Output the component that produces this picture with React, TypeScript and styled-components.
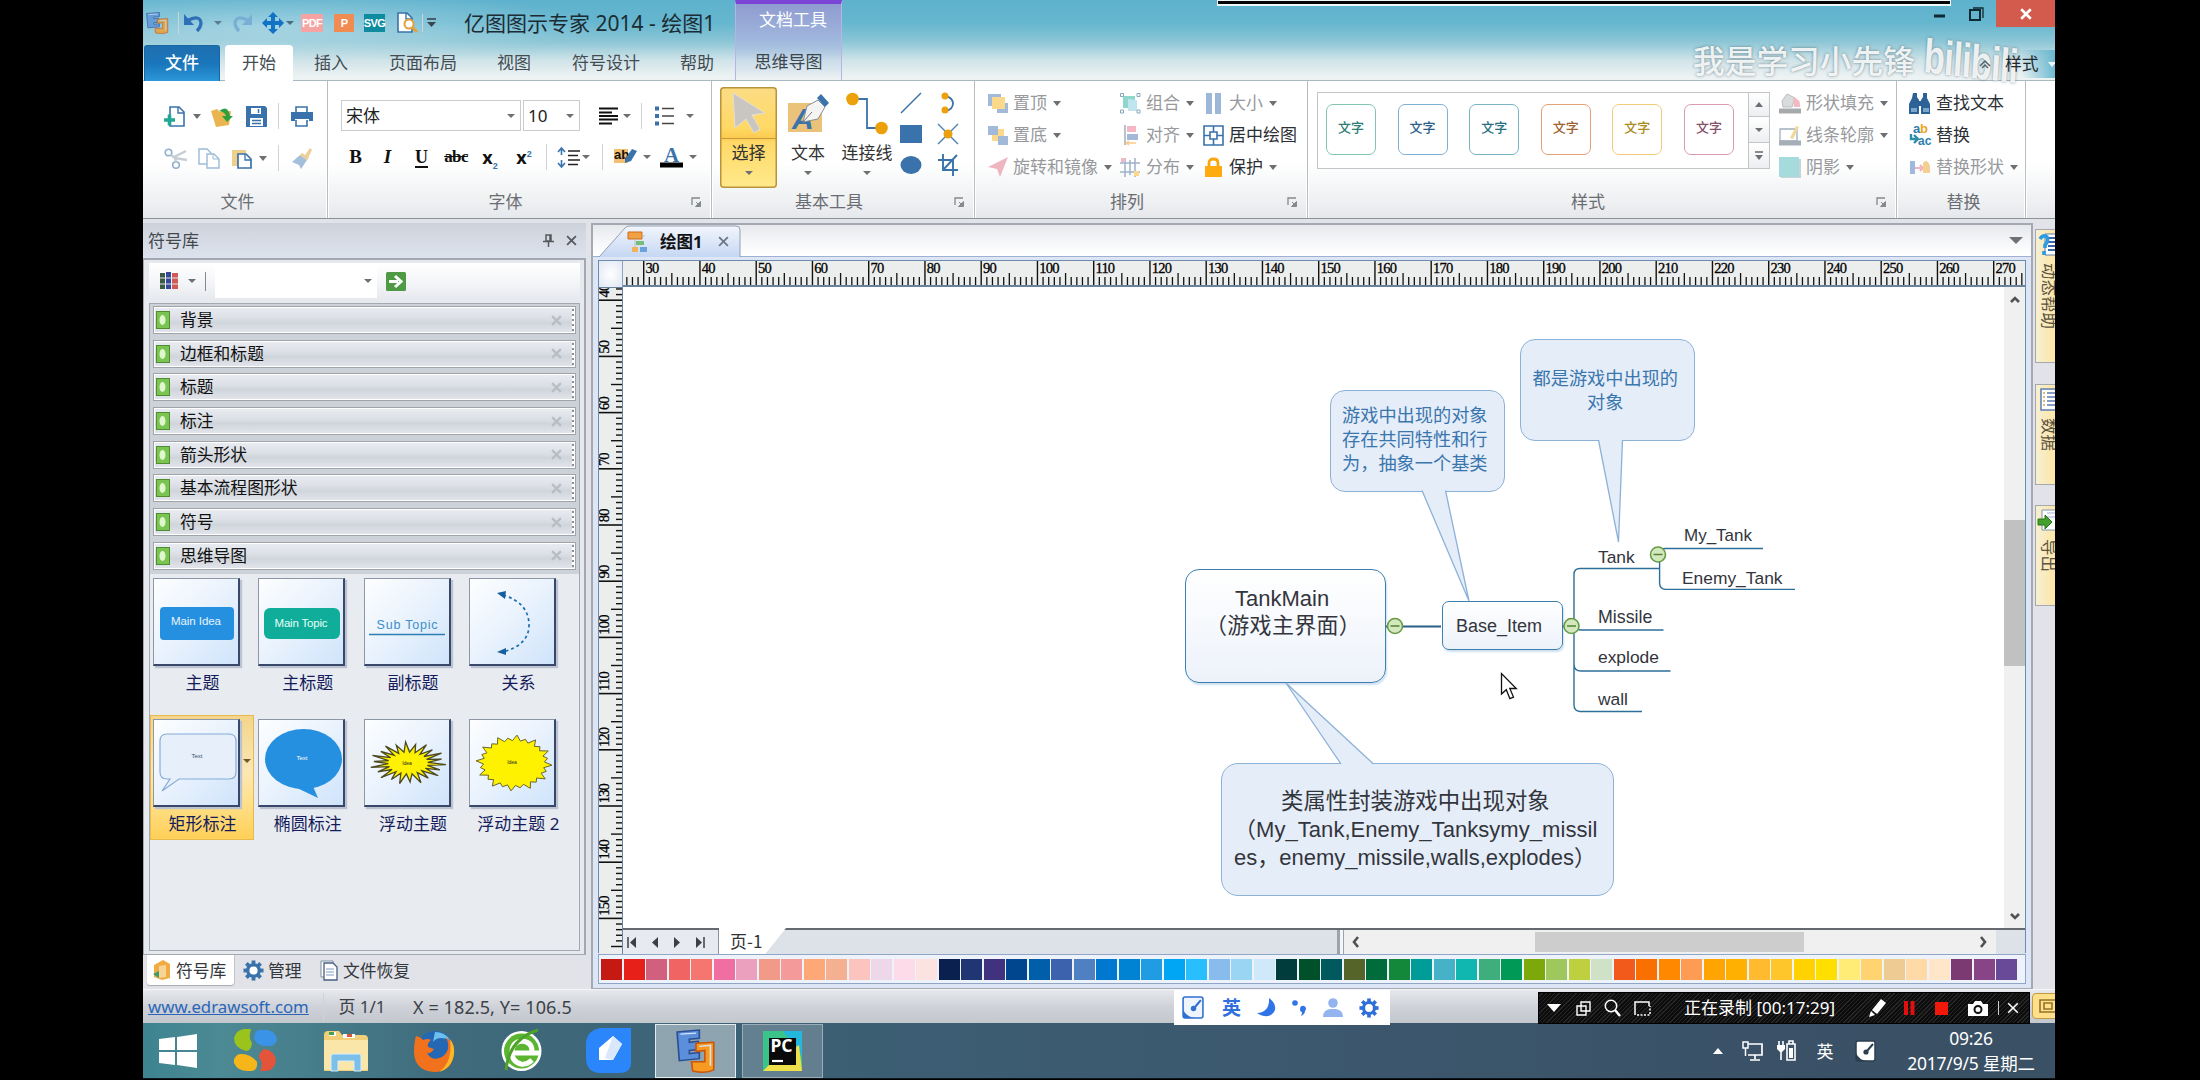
import React from "react";
import styled, { createGlobalStyle, css } from "styled-components";

const UI = '"Noto Sans","Noto Sans CJK SC",sans-serif';
const ARIAL = '"Liberation Sans","Noto Sans CJK SC",sans-serif';

const Global = createGlobalStyle`
  *{box-sizing:border-box}
  body{margin:0;background:#000;font-family:${UI};font-size:17px;overflow:hidden}
  svg{display:block;overflow:visible;flex:none}
`;

const Screen = styled.div`
  width:2200px;height:1080px;background:#000;padding-left:143px;
`;
const Desktop = styled.div`
  width:1912px;height:1079px;display:flex;flex-direction:column;overflow:hidden;
`;

/* ---------- shared bits ---------- */
const Row = styled.div<{ $h?: number; $top?: number }>`
  display:flex;align-items:center;flex:none;
  height:${(p) => (p.$h ? p.$h + "px" : "auto")};margin-top:${(p) => p.$top || 0}px;
`;
const Cell = styled.span<{ $w: number; $ml?: number }>`
  flex:none;display:flex;align-items:center;justify-content:center;
  width:${(p) => p.$w}px;margin-left:${(p) => p.$ml || 0}px;white-space:nowrap;
`;
const Caret = styled.i<{ $ml?: number; $c?: string; $s?: number }>`
  flex:none;width:0;height:0;margin-left:${(p) => p.$ml || 0}px;
  border:${(p) => p.$s || 4.5}px solid transparent;border-bottom:0;
  border-top:${(p) => (p.$s || 4.5) + 0.5}px solid ${(p) => p.$c || "#6d7073"};
`;
const Bar = styled.i<{ $ml?: number; $h?: number }>`
  flex:none;width:1px;height:${(p) => p.$h || 26}px;background:#cfd2d6;margin-left:${(p) => p.$ml || 0}px;
`;
const Glyph = ({ w, h, children }: { w: number; h: number; children: React.ReactNode }) => (
  <svg width={w} height={h} viewBox={`0 0 ${w} ${h}`} fill="none">{children}</svg>
);

/* ---------- header ---------- */
const Header = styled.header`
  height:81px;flex:none;display:flex;position:relative;border-bottom:1px solid #a9b9c0;
  background:linear-gradient(#5fb2cd 0,#65b6cf 28%,#8cc6d6 52%,#cfe3e8 75%,#edf2f3 96%);
`;
const HeaderMain = styled.div`
  width:592px;flex:none;display:flex;flex-direction:column;
  background:radial-gradient(ellipse 330px 34px at 130px 26px,rgba(255,255,255,.38),transparent);
`;
const WindowTitle = styled.h1`
  margin:0 0 0 28px;font-size:21px;font-weight:400;color:#1c2b33;white-space:nowrap;line-height:30px;
`;
const Badge = styled.span<{ $bg: string }>`
  width:100%;height:18px;background:${(p) => p.$bg};color:#fff;display:flex;align-items:center;justify-content:center;
  font:700 11px/18px "Liberation Sans",sans-serif;letter-spacing:-.6px;
`;
const TabText = styled.span<{ $ml: number; $w: number }>`
  flex:none;margin-left:${(p) => p.$ml}px;width:${(p) => p.$w}px;text-align:center;white-space:nowrap;
  color:#434c52;font-size:17px;line-height:36px;height:36px;
`;
const FileTab = styled(TabText)`
  color:#fff;border-radius:3px 3px 0 0;border:1px solid #1767a3;border-bottom:0;
  background:linear-gradient(#1f6fb0,#1a76bb 50%,#2b97d8);line-height:34px;font-weight:500;
`;
const ActiveTab = styled(TabText)`
  background:#fff;border-radius:4px 4px 0 0;height:37px;
`;
const ToolTab = styled.div`
  width:107px;flex:none;border-top:4px solid #7a45d6;
  background:linear-gradient(#8f9bd0,#9fb5dc 45%,rgba(200,215,235,.5) 75%,rgba(235,240,244,0));
  border-left:1px solid #b9b2e4;border-right:1px solid #b9b2e4;
  display:flex;flex-direction:column;align-items:center;
  span{line-height:24px;white-space:nowrap}
  span:first-child{color:#fff;margin:4px 0 18px 9px}
  span:last-child{color:#3c464d}
`;
const HeaderRight = styled.div`
  flex:1;display:flex;justify-content:flex-end;align-items:flex-start;
`;
const RecordFrame = styled.i`
  position:absolute;left:1074px;top:0;width:734px;height:6px;background:#050505;border:1px solid #eef7fa;border-bottom-width:2px;
`;
const CloseBox = styled.span`
  width:59px;height:27px;background:#d25b4e;display:flex;align-items:center;justify-content:center;margin-left:12px;
`;
const Watermark = styled.div`
  position:absolute;left:1550px;top:36px;height:46px;display:flex;align-items:center;color:rgba(255,255,255,.88);
  text-shadow:0 0 3px rgba(60,90,100,.7);font-size:31.7px;font-weight:500;white-space:nowrap;
  b{font:700 48px/40px "Liberation Sans",sans-serif;letter-spacing:-1px;transform:scaleX(.72) rotate(5deg);transform-origin:0 50%;margin:-6px 0 0 9px}
`;
const StyleMenu = styled.div`
  position:absolute;right:0;top:50px;height:28px;width:76px;display:flex;align-items:center;color:#1e2a30;
  background:linear-gradient(90deg,transparent 55%,rgba(98,180,206,.9));
  span{flex:none;margin-left:14px;line-height:28px;white-space:nowrap;font-size:16.800px}
`;

/* ---------- ribbon ---------- */
const Ribbon = styled.div`
  height:138px;flex:none;display:flex;border-bottom:1px solid #8d9298;
  background:linear-gradient(#fff 0,#fff 60%,#eef0f2 88%,#e6e8ec);
`;
const Group = styled.section<{ $w: number }>`
  width:${(p) => p.$w}px;flex:none;display:flex;flex-direction:column;
  border-right:1px solid #b9bcc1;box-shadow:inset -1px 0 #fff,1px 0 #fff;
`;
const GroupBody = styled.div<{ $pl?: number }>`
  height:105px;display:flex;align-items:flex-start;padding-left:${(p) => p.$pl || 0}px;
`;
const Stack = styled.div<{ $top: number; $ml?: number; $w?: number }>`
  flex:none;display:flex;flex-direction:column;padding-top:${(p) => p.$top}px;margin-left:${(p) => p.$ml || 0}px;
  width:${(p) => (p.$w ? p.$w + "px" : "auto")};
`;
const GroupLabel = styled.div<{ $plain?: boolean }>`
  height:32px;display:flex;align-items:center;color:#6a6d72;
  span{flex:1;text-align:center;line-height:32px;padding-left:${(p) => (p.$plain ? 5 : 2)}px}
  svg{margin-right:10px;margin-left:10px}
`;
const Combo = styled.div<{ $w: number; $ml: number }>`
  flex:none;width:${(p) => p.$w}px;height:31px;margin-left:${(p) => p.$ml}px;border:1.5px solid #c9cbce;background:#fff;
  display:flex;align-items:center;justify-content:space-between;padding:0 5px 0 4px;color:#222;font-size:17px;
  span{line-height:28px}
`;
const Letter = styled.span<{ $i?: boolean; $u?: boolean; $s?: boolean; $sz?: number; $sans?: boolean }>`
  font:700 ${(p) => p.$sz || 19}px/26px ${(p) => (p.$sans ? '"Noto Sans",sans-serif' : '"Liberation Serif",serif')};color:#111;
  ${(p) => p.$i && css`font-style:italic;`}
  ${(p) => p.$u && css`text-decoration:underline 2px;text-underline-offset:3px;`}
  ${(p) => p.$s && css`text-decoration:line-through;letter-spacing:-.6px;`}
  sub,sup{font:700 9px/0 "Liberation Sans",sans-serif;color:#3a73ab}
`;
const BigButton = styled.div<{ $w: number; $ml?: number; $on?: boolean }>`
  flex:none;width:${(p) => p.$w}px;height:101px;margin:6px 0 0 ${(p) => p.$ml || 0}px;
  display:flex;flex-direction:column;align-items:center;color:#333;
  ${(p) => p.$on && css`
    border-radius:4px;background:linear-gradient(#fbdc85,#ffd965 40%,#fccb50 50%,#ffd968 55%,#ffe98c);box-shadow:inset 0 0 0 1.5px #b8933a;
  `}
`;
const BigIcon = styled.span<{ $on?: boolean }>`
  height:52px;width:100%;display:flex;align-items:center;justify-content:center;
  ${(p) => p.$on && css`border-bottom:1px solid #c39a3e;`}
`;
const BigText = styled.span`height:28px;line-height:28px;white-space:nowrap;margin-bottom:4px;`;
const ShapeGrid = styled.div`
  display:grid;grid-template-columns:37px 22px;grid-auto-rows:31px;margin:6px 0 0 5px;align-items:center;
`;
const ToolItem = styled.div<{ $off?: boolean }>`
  height:32px;display:flex;align-items:center;gap:5px;color:${(p) => (p.$off ? "#97999c" : "#2c2f33")};white-space:nowrap;
  span{line-height:32px}
`;
const Tool = ({ icon, text, caret, off }: { icon: React.ReactNode; text: string; caret?: boolean; off?: boolean }) => (
  <ToolItem $off={off}>{icon}<span>{text}</span>{caret && <Caret $ml={1} />}</ToolItem>
);
const Gallery = styled.div`
  width:453px;height:77px;margin:11px 0 0 9px;border:1.5px solid #c3c5c8;background:#fff;display:flex;flex:none;
`;
const GalleryCards = styled.div`flex:1;display:flex;gap:21.6px;padding:11px 0 0 8px;`;
const StyleCard = styled.div<{ $line: string; $ink: string }>`
  width:50px;height:51px;border:1.5px solid ${(p) => p.$line};border-radius:7px;flex:none;
  font-size:13px;line-height:44px;text-align:center;color:${(p) => p.$ink};font-weight:500;
`;
const GalleryScroll = styled.div`
  width:21px;border-left:1px solid #c3c5c8;display:grid;grid-template-rows:24px 26px 1fr;
  div{border-bottom:1px solid #c3c5c8;background:linear-gradient(#fff,#eceef1);display:flex;align-items:center;justify-content:center}
  div:last-child{border-bottom:0}
`;

/* ---------- library panel ---------- */
const Work = styled.div`height:770px;flex:none;display:flex;background:#e1e3e8;overflow:hidden;`;
const Library = styled.aside`width:443px;flex:none;display:flex;flex-direction:column;padding-top:4px;`;
const LibraryHead = styled.div`
  height:35px;display:flex;align-items:center;background:linear-gradient(#cdd2da,#dde3ee);color:#43484e;padding-left:5px;padding-right:9px;
  span{flex:1;line-height:30px}
  svg{margin-left:12px}
`;
const LibraryFrame = styled.div`
  height:697px;border:solid #a4a9b1;border-width:2px 2px 1.5px 1px;padding:3px 4px 3px 5px;background:#e6e9ee;display:flex;flex-direction:column;
`;
const LibraryTools = styled.div`
  height:36px;flex:none;display:flex;align-items:center;background:linear-gradient(#fff,#f3f4f7 60%,#e6e9ee);margin-bottom:4px;
`;
const SearchCombo = styled.div`
  width:162px;height:34px;margin-left:9px;background:#fff;display:flex;align-items:center;justify-content:flex-end;padding-right:5px;
`;
const Shelf = styled.div`flex:1;border:1px solid #a4a9b1;background:#e8ebf0;`;
const Sections = styled.div`
  background:#cdd1d8;padding:2px 3px 4px;display:flex;flex-direction:column;gap:5.7px;
`;
const Section = styled.div`
  height:28px;border:1.5px solid #9fa4ab;box-shadow:inset 0 0 0 1px #fff;display:flex;align-items:center;padding:0 1px 0 2px;color:#111;
  background:linear-gradient(#e9ecf1,#dde1e7 40%,#d0d5dc 60%,#e3e6eb);
  span{flex:1;margin-left:10px;line-height:26px;font-size:16.8px}
`;
const Grip = styled.i`width:2px;height:22px;margin-left:10px;background:repeating-linear-gradient(#8b9097 0 2px,#fff 2px 5px);`;
const Thumbs = styled.div`display:grid;grid-template-columns:repeat(4,105.3px);row-gap:17px;`;
const ThumbCell = styled.figure<{ $on?: boolean }>`
  margin:0;height:124.5px;width:104px;padding:4px 0 0 3px;position:relative;
  ${(p) => p.$on && css`background:linear-gradient(#f3d58a,#fbe7b4 45%,#ffe08a 70%,#ffcf55);box-shadow:inset 0 0 0 1px #e8b94c;`}
  figcaption{color:#141c5c;text-align:center;line-height:24px;margin:5px 0 0 0;white-space:nowrap;width:99px}
`;
const Thumb = styled.div`
  width:87px;height:88px;border:1px solid #8d97a8;border-right:2px solid #39476b;border-bottom:2px solid #39476b;
  background:linear-gradient(135deg,#fdfeff,#e9f2fd 50%,#cfe4fb);box-shadow:2px 2px 1px #bcc3d0;
`;
const ThumbArrow = styled.i`position:absolute;right:3px;top:44px;border:4px solid transparent;border-top:4px solid #6b5a2c;border-bottom:0;`;
const LibraryTabs = styled.div`flex:1;display:flex;align-items:flex-start;padding-left:4px;color:#33383d;`;
const LibraryTab = styled.div<{ $on?: boolean; $w: number; $gap?: number }>`
  width:${(p) => p.$w}px;height:30px;display:flex;align-items:center;gap:${(p) => p.$gap || 5}px;padding-left:6px;white-space:nowrap;
  font-size:16.8px;
  ${(p) => p.$on && css`background:#fff;border-radius:0 0 3px 3px;box-shadow:0 1px 1px #a5a9af,1px 0 #c5c8cd;`}
`;

/* ---------- document ---------- */
const Doc = styled.main`
  width:1442px;margin:4px 0 0 5px;flex:none;border:2px solid #a4a9b1;border-bottom:1px solid #a4a9b1;background:#dce6f7;
  display:flex;flex-direction:column;
`;
const TabStrip = styled.div`
  height:32px;flex:none;background:linear-gradient(#e6e8ec,#f7f8fa 60%,#fff);border-bottom:1px solid #9fb0d0;
  display:flex;justify-content:space-between;align-items:center;padding:0 8px 0 6px;
`;
const DocTab = styled.div`
  width:141px;height:31px;margin-top:2px;display:flex;align-items:center;padding-left:28px;position:relative;
  b{font-weight:700;color:#111;font-size:16.5px;margin-left:12px;flex:1;line-height:28px;position:relative}
  svg{position:relative;margin-right:0}
  svg:last-child{margin-right:11px}
`;
const TabShape = styled.svg`&&{position:absolute;left:0;top:0;margin:0}`;
const Sheet = styled.div`
  margin:3px 5px 0 5px;width:1428px;height:693px;flex:none;border:1px solid #6f8bab;display:grid;
  grid-template-columns:24px 1fr;grid-template-rows:26px 1fr;
`;
const Corner = styled.div`background:radial-gradient(#fff,#dfe6f4);border-right:1px solid #8da4c4;`;
const RulerH = styled.div`background:#eceeee;border-bottom:2px solid #6a839c;overflow:hidden;`;
const RulerV = styled.div`background:#eceeee;border-right:1px solid #6a839c;border-top:1px solid #6a839c;overflow:hidden;`;
const View = styled.div`display:grid;grid-template-columns:1fr 21px;grid-template-rows:641px 1fr;`;
const Canvas = styled.div`background:#fff;position:relative;overflow:hidden;`;
const ScrollV = styled.div`
  background:#f0f0f0;display:flex;flex-direction:column;align-items:center;padding:7px 0 6px;
  i{width:21px;height:146px;background:#c1c1c1}
`;
const PageBar = styled.div`
  grid-column:1 / 3;display:flex;align-items:stretch;border-top:2px solid #666a6e;background:#dde1e8;
`;
const PageNav = styled.div`
  width:96px;display:flex;align-items:center;justify-content:space-between;padding:0 13px 0 4px;background:#e7eaf0;border-right:1px solid #8d9298;
`;
const PageTab = styled.div`
  width:67px;margin-top:-2px;background:#fff;clip-path:polygon(0 0,100% 0,69% 100%,0 100%);
  font:17px/26px "Noto Sans CJK SC",sans-serif;color:#333;padding-left:11px;
`;
const Splitter = styled.i`width:7px;margin-left:551px;background:#f4f6f9;border:solid #9da3ac;border-width:0 1px 0 3px;`;
const ScrollH = styled.div`
  width:652px;background:#f0f0f0;display:flex;align-items:center;padding:0 7px 0 6px;
  i{width:270px;height:20px;background:#cdcdcd;margin:0 173px 0 173px}
`;
const Palette = styled.div`
  margin:1px 5px 0 5px;height:30px;width:1428px;border:1px solid #8fa6c6;display:flex;gap:1.5px;padding:4px 0 0 2px;background:#eef3fb;
`;
const Swatch = styled.i<{ $c: string }>`width:21px;height:21px;flex:none;background:${(p) => p.$c};`;

const NodeBox = styled.div<{ $x: number; $y: number; $w: number; $h: number; $r: number; $kind?: "note" }>`
  position:absolute;left:${(p) => p.$x - 623}px;top:${(p) => p.$y - 287}px;width:${(p) => p.$w}px;height:${(p) => p.$h}px;
  border-radius:${(p) => p.$r}px;border:1.5px solid ${(p) => (p.$kind ? "#8db2d8" : "#3d7fae")};
  background:${(p) => (p.$kind ? "#e5edf8" : "linear-gradient(#fff,#edf2fa)")};
  ${(p) => !p.$kind && css`box-shadow:1px 2px 2px #cfe0f0;`}
`;
const Label = styled.div<{ $x: number; $y: number; $s?: number; $c?: string; $ls?: number }>`
  position:absolute;left:${(p) => p.$x - 623}px;top:${(p) => p.$y - 287 - 15}px;line-height:30px;white-space:nowrap;
  font-family:${ARIAL};font-size:${(p) => p.$s || 17.4}px;color:${(p) => p.$c || "#33353c"};letter-spacing:${(p) => p.$ls || 0}px;
`;
const Lines = styled.svg`&&{position:absolute;left:0;top:0}`;

/* ---------- right rail ---------- */
const Rail = styled.div`flex:1;padding:10px 0 0 2px;display:flex;flex-direction:column;`;
const RailTab = styled.div<{ $h: number; $mb: number }>`
  height:${(p) => p.$h}px;margin-bottom:${(p) => p.$mb}px;width:34px;border:1.5px solid #a4a9b1;
  background:linear-gradient(90deg,#f6efd2,#ffe399 80%);padding:3px 0 0 3px;
  span{display:block;writing-mode:vertical-rl;text-orientation:sideways;color:#5a5240;line-height:20px;margin-top:8px;font-size:16.5px}
`;

/* ---------- status + taskbar ---------- */
const Status = styled.footer`
  height:34px;flex:none;display:flex;align-items:center;border-top:1px solid #f4f5f7;
  background:linear-gradient(#e6e8ed,#cfd2d8 50%,#c3c7ce);color:#3c4147;position:relative;
  span{white-space:nowrap;line-height:30px}
`;
const Link = styled.a`color:#2a66b8;text-decoration:underline;margin-left:5px;width:163px;font-size:16.8px;`;
const Coords = styled.span`font-size:18px;margin-left:26px;width:160px;letter-spacing:.1px;`;
const Ime = styled.div`
  position:absolute;left:1031px;top:0;width:216px;height:35px;background:#fff;display:flex;align-items:center;z-index:1;
  b{color:#2f6fe0;font-weight:700;font-size:19px;line-height:34px}
`;
const Recorder = styled.div`
  position:absolute;left:1395px;top:2px;width:492px;height:32px;color:#fff;display:flex;align-items:center;
  background:repeating-linear-gradient(135deg,#0d0d0d 0 2px,#262626 2px 3px);border:1px solid #000;
`;
const YellowTool = styled.div`
  position:absolute;left:1889px;top:3px;width:30px;height:26px;border-radius:4px;border:1.5px solid #c39a3e;background:#ffe08a;
  display:flex;align-items:center;padding-left:6px;
`;
const Taskbar = styled.div`
  height:56px;flex:none;display:flex;align-items:center;color:#fff;border-bottom:1px solid #10151a;
  background:linear-gradient(90deg,#3d8490 0,#4c8a94 4%,#3f6b7c 16%,#3c5f74 35%,#3c586e 60%,#3a5167 85%,#3a5064);
`;
const TaskButton = styled.div<{ $on?: boolean; $ml: number }>`
  width:81px;height:54px;margin-left:${(p) => p.$ml}px;display:flex;align-items:center;justify-content:center;
  background:${(p) => (p.$on ? "rgba(255,255,255,.42)" : "rgba(255,255,255,.2)")};border:1.5px solid ${(p) => (p.$on ? "#e4ebef" : "rgba(255,255,255,.35)")};
`;
const Clock = styled.div`
  width:134px;margin-left:28px;text-align:center;font-size:17.500px;line-height:25px;white-space:nowrap;letter-spacing:-.2px;
`;

/* ---------- data ---------- */
const sections = ["背景", "边框和标题", "标题", "标注", "箭头形状", "基本流程图形状", "符号", "思维导图"];
const cards: [string, string][] = [
  ["#82c4b4", "#2e7d76"], ["#7fb0d4", "#2c5f8c"], ["#78b4c6", "#28707f"],
  ["#e4a077", "#a0612f"], ["#f0cc78", "#a98b1e"], ["#d99bb0", "#84506a"],
];
const swatches = (
  "c41a12 e8201a d1607f f16464 f4766e f06fa0 eba0bd f19a88 f59a9a ffa877 f4b090 fbc4be ecd8e8 fddbe9 fde2e2 " +
  "0a2150 203672 413280 00468e 005fa8 3c62ae 4e80c2 0078d0 0083d2 209de2 00a6f4 29bfff 87bcec 9ad5f4 cfe9fa " +
  "003c3c 00502a 00595c 55652a 006c3c 14883a 009c98 46b2c8 10b6b0 3eae7c 009a56 7ca80a 9ec85e bed040 cfe2c8 " +
  "f25a1c fa7000 ff8800 ff9c54 ffa400 ffb000 ffba30 ffc62c ffd200 ffdf00 ffec76 ffd470 edcb92 ffdaa6 ffe6c8 " +
  "7c3a72 874486 694a98"
).split(" ");

/* ---------- icons ---------- */
const B = "#3a73ab";
const EdrawMark = ({ w, h, dim }: { w: number; h: number; dim?: boolean }) => (
  <svg width={w} height={h} viewBox="3 1 36 43" preserveAspectRatio="none" opacity={dim ? 0.75 : 1}>
    <path d="M4 4l20-2v8l-9 1v3l8-1v8l-8 1v3l9-1v6L6 32z" fill="#5b8fdc" stroke="#2b4f94" strokeWidth="1.500" />
    <path d="M21 15l16-1v27q-7 4-19 1l-1-9h12V22l-8 1z" fill="#f79a22" stroke="#c9560c" strokeWidth="1.500" />
    <path d="M7 6l14-1M24 18l10-1v20" stroke="#d6e4f8" strokeWidth="1.400" fill="none" />
  </svg>
);
const Undo = ({ c, flip }: { c: string; flip?: boolean }) => (
  <svg width="20" height="19" viewBox="0 0 20 19">
    <g transform={flip ? "translate(20 0) scale(-1 1)" : undefined}>
      <path d="M3 8q13-7 14 2 0 4-4 8" fill="none" stroke={c} strokeWidth="3.200" />
      <path d="M0 1v11h10z" fill={c} />
    </g>
  </svg>
);
const Page = ({ c = B, o = 1 }: { c?: string; o?: number }) => (
  <g opacity={o}><path d="M6 1h9l5 5v14H6z" fill="#fff" stroke={c} strokeWidth="1.6" /><path d="M14 1v6h6" stroke={c} strokeWidth="1.4" fill="none" /></g>
);
const Launcher = () => (
  <Glyph w={10} h={10}><path d="M1 8V1h8" stroke="#85888c" strokeWidth="1.3" /><path d="M5 5l3 3M9.500 4.500v5h-5z" stroke="#85888c" fill="#85888c" /></Glyph>
);
const Cross = ({ s = 10, c = "#5d6268", w = 2 }: { s?: number; c?: string; w?: number }) => (
  <svg width={s} height={s} viewBox="0 0 10 10"><path d="M1 1l8 8M9 1L1 9" stroke={c} strokeWidth={w} /></svg>
);
const Gear = ({ s, c }: { s: number; c: string }) => (
  <svg width={s} height={s} viewBox="-11 -11 22 22">
    {[0, 45, 90, 135].map((a) => <path key={a} d="M0-10.500V10.500" stroke={c} strokeWidth="4" transform={`rotate(${a})`} />)}
    <circle r="6" fill="#fff" stroke={c} strokeWidth="3.4" />
  </svg>
);
const PenSquare = ({ c, bg, s = 21 }: { c: string; bg: string; s?: number }) => (
  <svg width={s} height={s + 1} viewBox="0 0 21 22">
    <rect x="1" y="1" width="19" height="20" rx="2" fill={bg} stroke={c} strokeWidth="1.5" />
    <path d="M1 13q3 7 11 8H3q-2 0-2-2z" fill={c} /><path d="M18 4l-6 7" stroke={c} strokeWidth="2" /><circle cx="11" cy="12" r="2.600" fill={c} />
  </svg>
);

const burst = (cx: number, cy: number, rx: number, ry: number, k: number, n: number) =>
  Array.from({ length: n * 2 }, (_, i) => {
    const a = (Math.PI * i) / n + 0.08;
    const f = i % 2 ? k : i % 4 ? 0.9 : 1;
    return `${(cx + rx * f * Math.cos(a)).toFixed(1)},${(cy + ry * f * Math.sin(a)).toFixed(1)}`;
  }).join(" ");

const T = (p: { x: number; y: number; s: number; c: string; children: string; w?: number }) => (
  <text x={p.x} y={p.y} fontSize={p.s} fill={p.c} textAnchor="middle" fontFamily="Liberation Sans" textLength={p.w}>{p.children}</text>
);
const thumbs: { name: string; on?: boolean; art: React.ReactNode }[] = [
  { name: "主题", art: <><rect x="6" y="28" width="74" height="33" rx="4" fill="#2690e0" /><T x={42} y={45.500} s={11.500} c="#e8f4ff" w={50}>Main Idea</T></> },
  { name: "主标题", art: <><rect x="5" y="29" width="76" height="31" rx="6" fill="#10ae9a" /><T x={42} y={47.500} s={11.500} c="#e4fff8" w={53}>Main Topic</T></> },
  { name: "副标题", art: <><T x={42} y={50} s={12.500} c="#3a8fc8" w={61}>Sub Topic</T><path d="M4 55.500h76" stroke="#2f7fb4" strokeWidth="1.600" /></> },
  { name: "关系", art: <><path d="M33 16q26 8 26 30 0 20-26 27" fill="none" stroke="#1d6cab" strokeWidth="1.700" strokeDasharray="3 3" /><path d="M27 14l9-2-1 8zM27 73l9-4v7z" fill="#155fa0" /></> },
  { name: "矩形标注", on: true, art: <><path d="M13 14h62q7 0 7 7v31q0 7-7 7H25L8 71l8-12h-3q-7 0-7-7V21q0-7 7-7z" fill="#e6effa" stroke="#86acd8" strokeWidth="1.200" /><T x={43} y={38} s={6} c="#35506e">Text</T></> },
  { name: "椭圆标注", art: <><ellipse cx="44.500" cy="39" rx="38.500" ry="30" fill="#2690e0" /><path d="M36 67l23 11-6-14z" fill="#2690e0" /><T x={43} y={40} s={6} c="#fff">Text</T></> },
  { name: "浮动主题", art: <><polygon points={burst(43, 43, 38, 21, 0.52, 22)} fill="#fff200" stroke="#4d4a22" strokeWidth="1.300" /><T x={42} y={45} s={5} c="#222">Idea</T></> },
  { name: "浮动主题 2", art: <><polygon points={burst(44, 43, 38, 28, 0.8, 24)} fill="#fff200" stroke="#6a6628" strokeWidth="1" /><T x={42} y={44} s={5} c="#222">Idea</T></> },
];

/* ---------- rulers: one minor tick is 5.625px ---------- */
const HorizontalRuler = () => {
  const ticks = [];
  for (let i = -3; i <= 245; i++) {
    const x = 20.7 + i * 5.625;
    const m = ((i % 10) + 10) % 10;
    ticks.push(<path key={i} d={`M${x} 24V${m === 0 ? 0 : m === 5 ? 12 : 16}`} stroke="#111" strokeWidth={m === 0 ? 1.4 : 1.3} />);
  }
  return (
    <svg width="1402" height="25">
      {ticks}
      {Array.from({ length: 25 }, (_, i) => (
        <text key={i} x={22.500 + i * 56.25} y="12" fontFamily="Liberation Serif" fontSize="14.500" letterSpacing="-.8" fill="#000" stroke="#000" strokeWidth=".3">{30 + i * 10}</text>
      ))}
    </svg>
  );
};
const VerticalRuler = () => {
  const ticks = [];
  for (let i = -2; i <= 115; i++) {
    const y = 12.2 + i * 5.62;
    const m = ((i % 10) + 10) % 10;
    ticks.push(<path key={i} d={`M24 ${y}H${m === 0 ? 0 : m === 5 ? 12 : 17}`} stroke="#111" strokeWidth={m === 0 ? 1.6 : 1.4} />);
  }
  return (
    <svg width="24" height="666">
      {ticks}
      {Array.from({ length: 12 }, (_, i) => (
        <text key={i} transform={`translate(10 ${9.5 + i * 56.2}) rotate(-90)`} fontFamily="Liberation Serif" fontSize="14.500" letterSpacing="-.8" fill="#000" stroke="#000" strokeWidth=".3">{40 + i * 10}</text>
      ))}
    </svg>
  );
};

const Fold = ({ x, y }: { x: number; y: number }) => (
  <g><circle cx={x} cy={y} r="7.500" fill="#d3e8bd" stroke="#679b45" strokeWidth="1.600" /><path d={`M${x - 4.5} ${y}h9`} stroke="#55803a" strokeWidth="1.500" /></g>
);

const MindMap = () => (
  <Canvas>
    <NodeBox $x={1185} $y={569} $w={201} $h={114} $r={14} />
    <NodeBox $x={1441.500} $y={601} $w={121} $h={49} $r={7} />
    <NodeBox $x={1330} $y={389.500} $w={175} $h={102} $r={15} $kind="note" />
    <NodeBox $x={1519.500} $y={338.500} $w={175} $h={102.500} $r={15} $kind="note" />
    <NodeBox $x={1221} $y={763} $w={392.500} $h={133} $r={17} $kind="note" />
    <Lines width="1380" height="641" viewBox="623 287 1380 641">
      <g fill="#e5edf8" stroke="#8db2d8" strokeWidth="1.300">
        <path d="M1422 490.500L1469 601 1445.500 490.500" /><path d="M1598.500 440L1618.500 542 1622.500 440" /><path d="M1341 764L1286 683 1373.500 764" />
      </g>
      <g fill="none" stroke="#2d6f9b" strokeWidth="1.400">
        <path d="M1386 626.500H1441" stroke="#2b5f85" strokeWidth="2" />
        <path d="M1562 626.500h12M1659.600 568.500H1580q-6 0-6 6V705q0 6 6 6.500H1642M1574 622q0 8 7 8H1663.500M1574 664q0 7 7 7H1670.500" />
        <path d="M1659.600 560v23q0 6 6 6.400H1795M1659 556q0-7.500 6-7.500H1763" />
      </g>
      <Fold x={1395} y={626} /><Fold x={1571.500} y={626} /><Fold x={1658} y={554.500} />
      <path d="M1501.500 673.500v20.500l4.800-4.300 3.600 9 3.600-1.600-3.700-8.600h6.500z" fill="#fff" stroke="#111" strokeWidth="1.300" />
    </Lines>
    <Label $x={1235} $y={599} $s={22}>TankMain</Label>
    <Label $x={1205} $y={626} $s={22} $ls={0.3}>（游戏主界面）</Label>
    <Label $x={1456} $y={625.500} $s={18}>Base_Item</Label>
    <Label $x={1598} $y={556.500}>Tank</Label>
    <Label $x={1684} $y={535.500} $s={17}>My_Tank</Label>
    <Label $x={1682} $y={577.500}>Enemy_Tank</Label>
    <Label $x={1598} $y={616.500} $s={17.800}>Missile</Label>
    <Label $x={1598} $y={657}>explode</Label>
    <Label $x={1598} $y={699}>wall</Label>
    {["游戏中出现的对象", "存在共同特性和行", "为，抽象一个基类"].map((t, i) => (
      <Label key={t} $x={1342} $y={415.500 + i * 24.2} $s={18.200} $c="#3a76ae">{t}</Label>
    ))}
    <Label $x={1532.500} $y={378.500} $s={18.200} $c="#3a76ae">都是游戏中出现的</Label>
    <Label $x={1587} $y={402.500} $s={18.200} $c="#3a76ae">对象</Label>
    <Label $x={1281} $y={801.500} $s={22.400}>类属性封装游戏中出现对象</Label>
    <Label $x={1234} $y={830} $s={22} $ls={0.05}>（My_Tank,Enemy_Tanksymy_missil</Label>
    <Label $x={1234} $y={858} $s={22}>es，enemy_missile,walls,explodes）</Label>
  </Canvas>
);

const Chevron = ({ d }: { d: string }) => (
  <Glyph w={12} h={12}><path d={d} stroke="#505356" strokeWidth="2.600" /></Glyph>
);

/* ---------- page parts ---------- */
const TitleArea = () => (
  <Header>
    <HeaderMain>
      <Row $h={45}>
        <Cell $w={24} $ml={2}><EdrawMark w={23} h={22} dim /></Cell>
        <Bar $ml={9} $h={22} />
        <Cell $w={20} $ml={5}><Undo c="#2e6fb8" /></Cell>
        <Caret $ml={10} $c="#5b7c8b" $s={4} />
        <Cell $w={20} $ml={10}><Undo c="#79afd4" flip /></Cell>
        <Cell $w={22} $ml={10}><Glyph w={22} h={22}><path d="M11 0l5 5h-3v4h4V6l5 5-5 5v-3h-4v4h3l-5 5-5-5h3v-4H5v3l-5-5 5-5v3h4V5H6z" fill="#1272c4" /></Glyph></Cell>
        <Caret $ml={2} $c="#4b6c7b" $s={4} />
        <Cell $w={22} $ml={7}><Badge $bg="#f5a3a3">PDF</Badge></Cell>
        <Cell $w={20} $ml={11}><Badge $bg="#f08c52">P</Badge></Cell>
        <Cell $w={21} $ml={10}><Badge $bg="#0f8ba0">SVG</Badge></Cell>
        <Cell $w={21} $ml={12}><Glyph w={21} h={21}><g transform="translate(-5 0)"><Page /></g><circle cx="12" cy="12" r="4.500" fill="#fff" stroke="#e2a13c" strokeWidth="2" /><path d="M15 15l5 5" stroke="#e2a13c" strokeWidth="3" /></Glyph></Cell>
        <Bar $ml={4} $h={18} />
        <Cell $w={9} $ml={4}><Glyph w={9} h={10}><path d="M0 1h9" stroke="#37474f" strokeWidth="1.600" /><path d="M0 4h9l-4.500 5z" fill="#37474f" /></Glyph></Cell>
        <WindowTitle>亿图图示专家 2014 - 绘图1</WindowTitle>
      </Row>
      <Row $h={36}>
        <FileTab $ml={1} $w={76}>文件</FileTab>
        <ActiveTab $ml={5} $w={68}>开始</ActiveTab>
        <TabText $ml={21} $w={34}>插入</TabText>
        <TabText $ml={41} $w={68}>页面布局</TabText>
        <TabText $ml={40} $w={34}>视图</TabText>
        <TabText $ml={41} $w={68}>符号设计</TabText>
        <TabText $ml={40} $w={34}>帮助</TabText>
      </Row>
    </HeaderMain>
    <ToolTab><span>文档工具</span><span>思维导图</span></ToolTab>
    <HeaderRight>
      <Row $h={27}>
        <Glyph w={11} h={9}><path d="M0 7h11" stroke="#0f2a35" strokeWidth="3" /></Glyph>
        <Cell $w={15} $ml={24}><Glyph w={15} h={14}><path d="M1 3h10v10H1z" stroke="#0f2a35" strokeWidth="2" /><path d="M4 1h10v10" stroke="#0f2a35" strokeWidth="1.300" /></Glyph></Cell>
        <CloseBox><Cross s={12} c="#fff" w={2.200} /></CloseBox>
      </Row>
    </HeaderRight>
    <RecordFrame />
    <Watermark>我是学习小先锋<b>bilibili</b></Watermark>
    <StyleMenu>
      <Glyph w={12} h={12}><path d="M1 8l5-5 5 5M3 10l3-3 3 3" stroke="#56646b" strokeWidth="1.500" /></Glyph>
      <span>样式</span><Caret $ml={9} $c="#eef7fa" />
    </StyleMenu>
  </Header>
);

const FileGroup = () => (
  <Group $w={185}>
    <GroupBody>
      <Stack $top={14}>
        <Row $h={42}>
          <Cell $w={21} $ml={21}><Glyph w={21} h={21}><Page /><path d="M0 14h11M5.500 8.500v11" stroke="#23a795" strokeWidth="3.600" /></Glyph></Cell>
          <Caret $ml={8} />
          <Cell $w={22} $ml={10}><Glyph w={22} h={21}><path d="M0 5l6-2 3 3 11-1-2 14-13 2z" fill="#eab54e" /><path d="M8 5q9-7 11 5h3l-6 6-5-6h4q-1-4-7-5z" fill="#2f9e3f" /></Glyph></Cell>
          <Cell $w={21} $ml={13}><Glyph w={21} h={21}><path d="M0 0h19l2 2v19H0z" fill={B} /><path d="M5 2h10v6H5zM4 12h13v8H4z" fill="#fff" /><path d="M6 14.500h9M6 17.500h9M12.500 3v4" stroke={B} strokeWidth="1.500" /></Glyph></Cell>
          <Bar $ml={11} />
          <Cell $w={22} $ml={12}><Glyph w={22} h={21}><path d="M5 7V1h11v6M5 14v6h11v-6" fill="#fff" stroke={B} strokeWidth="1.600" /><path d="M0 6h22v9h-4v-2H4v2H0z" fill={B} /></Glyph></Cell>
        </Row>
        <Row $h={42}>
          <Cell $w={23} $ml={21}><Glyph w={23} h={21}><circle cx="4.500" cy="4.500" r="3.300" stroke="#8fb0d0" strokeWidth="1.600" /><circle cx="12" cy="17" r="3.300" stroke="#8fb0d0" strokeWidth="1.600" /><path d="M7 7l4 3 1 4M10 9l12-6M11 10l12 2" stroke="#c6cdd4" strokeWidth="2.400" /></Glyph></Cell>
          <Cell $w={22} $ml={11}><Glyph w={22} h={21}><path d="M1 1h8l4 4v11H1z" stroke="#9dbad6" strokeWidth="1.400" fill="#fff" /><path d="M9 6h7l5 5v9H9z" stroke="#9dbad6" strokeWidth="1.400" fill="#fff" /><path d="M15 6v5h6" stroke="#9dbad6" /></Glyph></Cell>
          <Cell $w={20} $ml={12}><Glyph w={20} h={21}><path d="M0 2h14v16H0z" fill="#efcf8c" /><path d="M6 6h8l5 5v9H6z" fill="#fff" stroke={B} strokeWidth="1.700" /><path d="M13 6v6h6" stroke={B} strokeWidth="1.300" /></Glyph></Cell>
          <Caret $ml={7} />
          <Bar $ml={11} />
          <Cell $w={20} $ml={13}><Glyph w={20} h={21}><path d="M13 7l5-7 2 2-4 8z" fill="#eccf98" /><path d="M8 7l7 5-6 9-2-4-7-3z" fill="#a3bfdc" /><path d="M9 6l7 5" stroke="#eccf98" strokeWidth="3" /></Glyph></Cell>
        </Row>
      </Stack>
    </GroupBody>
    <GroupLabel $plain><span>文件</span></GroupLabel>
  </Group>
);

const FontGroup = () => (
  <Group $w={384}>
    <GroupBody>
      <Stack $top={14}>
        <Row $h={41}>
          <Combo $w={180} $ml={13}><span>宋体</span><Caret $s={4} /></Combo>
          <Combo $w={57} $ml={2}><span>10</span><Caret $s={4} /></Combo>
          <Cell $w={19} $ml={19}><Glyph w={19} h={18}><path d="M0 1.500h19M0 5.500h13M0 9h19M0 12.500h19M0 16.500h13" stroke="#111" strokeWidth="2" /></Glyph></Cell>
          <Caret $ml={5} $s={4} />
          <Bar $ml={10} />
          <Cell $w={20} $ml={13}><Glyph w={20} h={20}><path d="M0 2.500h4M0 10h4M0 17.500h4" stroke={B} strokeWidth="4" /><path d="M7 2.500h12M7 10h12M7 17.500h12" stroke="#444" strokeWidth="1.600" /></Glyph></Cell>
          <Caret $ml={11} $s={4} />
        </Row>
        <Row $h={42}>
          <Cell $w={17} $ml={19}><Letter>B</Letter></Cell>
          <Cell $w={17} $ml={15}><Letter $i>I</Letter></Cell>
          <Cell $w={17} $ml={17}><Letter $u $sz={18}>U</Letter></Cell>
          <Cell $w={26} $ml={13}><Letter $s $sz={17}>abc</Letter></Cell>
          <Cell $w={20} $ml={11}><Letter $sans $sz={18}>x<sub>2</sub></Letter></Cell>
          <Cell $w={20} $ml={14}><Letter $sans $sz={18}>x<sup>2</sup></Letter></Cell>
          <Bar $ml={12} />
          <Cell $w={22} $ml={11}><Glyph w={22} h={21}><path d="M3.500 1v7M3.500 13v7M0 5l3.500-4L7 5M0 16l3.500 4L7 16" stroke={B} strokeWidth="1.600" /><path d="M10 4h12M10 8.500h10M10 13h12M10 17.500h10" stroke="#222" strokeWidth="1.600" /></Glyph></Cell>
          <Caret $ml={2} $s={4} />
          <Bar $ml={12} />
          <Cell $w={23} $ml={11}><Glyph w={23} h={20}><rect x="0" y="2" width="14" height="14" fill="#f4bf70" /><text x="0" y="12" fontFamily="Liberation Sans" fontWeight="700" fontSize="13" fill="#111">ab</text><path d="M11 12l7-10 5 2-6 10-6 2z" fill={B} /></Glyph></Cell>
          <Caret $ml={6} $s={4} />
          <Cell $w={23} $ml={9}><Glyph w={23} h={22}><text x="4" y="16" fontFamily="Liberation Serif" fontWeight="700" fontSize="21" fill={B}>A</text><path d="M0 19h23" stroke="#000" strokeWidth="5" /></Glyph></Cell>
          <Caret $ml={6} $s={4} />
        </Row>
      </Stack>
    </GroupBody>
    <GroupLabel><span>字体</span><Launcher /></GroupLabel>
  </Group>
);

const BasicGroup = () => (
  <Group $w={263}>
    <GroupBody>
      <BigButton $w={57} $ml={8} $on>
        <BigIcon $on><Glyph w={34} h={42}><path d="M1 1l32 20-13 2 8 14-6 4-8-14-11 9z" fill="#c9c6c2" stroke="#e3dfd6" /></Glyph></BigIcon>
        <BigText>选择</BigText><Caret $s={4} />
      </BigButton>
      <BigButton $w={62}>
        <BigIcon><Glyph w={41} h={37}><rect x="0" y="8" width="34" height="29" fill="#eac27a" /><text x="4" y="34" fontFamily="Liberation Sans" fontWeight="700" fontStyle="italic" fontSize="30" fill={B}>A</text><path d="M15 27l4-16 11-6 7 7-7 12z" fill="#f4f4f2" stroke="#8a8f94" /><path d="M29 3l4-4 8 9-4 4z" fill={B} /><path d="M15 27l9-10" stroke="#777" /></Glyph></BigIcon>
        <BigText>文本</BigText><Caret $s={4} />
      </BigButton>
      <BigButton $w={56}>
        <BigIcon><Glyph w={42} h={42}><path d="M8 7h13v29h13" stroke={B} strokeWidth="1.800" /><circle cx="6.500" cy="7" r="6.300" fill="#eca00c" /><circle cx="35.500" cy="36" r="6.300" fill="#eca00c" /></Glyph></BigIcon>
        <BigText>连接线</BigText><Caret $s={4} />
      </BigButton>
      <ShapeGrid>
        <Glyph w={22} h={22}><path d="M1 21L21 1" stroke={B} strokeWidth="1.400" /></Glyph>
        <Glyph w={22} h={22}><path d="M8 4q7 1 8 7 0 7-8 8" stroke={B} strokeWidth="1.800" /><circle cx="8" cy="4" r="3.500" fill="#eca00c" /><circle cx="8" cy="18" r="3.500" fill="#eca00c" /></Glyph>
        <Glyph w={22} h={18}><path d="M0 0h22v18H0z" fill={B} /></Glyph>
        <Glyph w={22} h={22}><path d="M1 1q10 10 20 20M21 1Q11 11 1 21" stroke="#4f81b0" strokeWidth="1.400" /><circle cx="11" cy="11" r="4.500" fill="#eca00c" /></Glyph>
        <Glyph w={22} h={18}><ellipse cx="11" cy="9" rx="10.500" ry="9" fill={B} /></Glyph>
        <Glyph w={22} h={22}><path d="M6 0v16h15M1 6h15v16M6 16L20 1" stroke={B} strokeWidth="1.900" /></Glyph>
      </ShapeGrid>
    </GroupBody>
    <GroupLabel><span>基本工具</span><Launcher /></GroupLabel>
  </Group>
);

const ArrangeGroup = () => (
  <Group $w={333}>
    <GroupBody $pl={13}>
      <Stack $top={6} $w={132}>
        <Tool off caret text="置顶" icon={<Glyph w={20} h={19}><path d="M0 0h13v12H0zM9 9h11v10H9z" fill="#a3b9da" /><path d="M4 3h13v12H4z" fill="#fbd88a" /></Glyph>} />
        <Tool off caret text="置底" icon={<Glyph w={20} h={19}><path d="M4 3h12v12H4z" fill="#fbd88a" /><path d="M0 0h10v9H0zM10 10h10v9H10z" fill="#a3b9da" /></Glyph>} />
        <Tool off caret text="旋转和镜像" icon={<Glyph w={20} h={20}><path d="M0 10L20 0l-8 20-3-8z" fill="#efb6c2" /></Glyph>} />
      </Stack>
      <Stack $top={6} $w={83}>
        <Tool off caret text="组合" icon={<Glyph w={21} h={21}><path d="M3 3h12v12H3z" fill="#8fd6cc" /><path d="M8 6l9 1v11H8z" fill="#bfe6ee" /><g stroke="#8aa6bb" fill="#fff"><path d="M.500.500h3v3h-3zM17 .500h3v3h-3zM.500 17h3v3h-3zM17 17h3v3h-3z" /></g></Glyph>} />
        <Tool off caret text="对齐" icon={<Glyph w={21} h={21}><path d="M5 0v20" stroke="#9aa9b8" strokeWidth="1.400" /><path d="M7 1h9v6H7z" fill="#f5b7c4" /><path d="M7 9h11v6H7z" fill="#a3b9da" /><path d="M6 18h10M9 16l-3 2 3 2" stroke="#fbc98a" strokeWidth="1.300" /></Glyph>} />
        <Tool off caret text="分布" icon={<Glyph w={21} h={21}><path d="M5 1v19M15 1v19M0 6h20M0 15h20M10 3v15" stroke="#9fb2c8" strokeWidth="1.500" /><path d="M1 1h4v4H1z" fill="#f5b7c4" /><path d="M14 14h5v5h-5z" fill="#fbd88a" /></Glyph>} />
      </Stack>
      <Stack $top={6}>
        <Tool off caret text="大小" icon={<Glyph w={21} h={21}><path d="M3 0h6v21H3zM12 0h6v21h-6z" fill="#9db7d8" /></Glyph>} />
        <Tool text="居中绘图" icon={<Glyph w={21} h={21}><path d="M1 1h19v19H1zM7 7h7v7H7zM10.500 1v6M10.500 14v6M1 10.500h6M14 10.500h6" stroke={B} strokeWidth="1.600" /></Glyph>} />
        <Tool caret text="保护" icon={<Glyph w={21} h={21}><path d="M6 9V6q0-4 4.500-4T15 6v3" stroke="#f7a60c" strokeWidth="2.800" /><path d="M2 9h17v11H2z" fill="#fdab0e" /></Glyph>} />
      </Stack>
    </GroupBody>
    <GroupLabel><span>排列</span><Launcher /></GroupLabel>
  </Group>
);

const StyleGroup = () => (
  <Group $w={589}>
    <GroupBody>
      <Gallery>
        <GalleryCards>{cards.map(([l, c]) => <StyleCard key={l} $line={l} $ink={c}>文字</StyleCard>)}</GalleryCards>
        <GalleryScroll>
          <div><Glyph w={8} h={5}><path d="M0 5h8L4 0z" fill="#6d7073" /></Glyph></div>
          <div><Caret $s={4} /></div>
          <div><Glyph w={8} h={9}><path d="M0 1h8" stroke="#6d7073" strokeWidth="1.600" /><path d="M0 4h8L4 9z" fill="#6d7073" /></Glyph></div>
        </GalleryScroll>
      </Gallery>
      <Stack $top={6} $ml={9}>
        <Tool off caret text="形状填充" icon={<Glyph w={22} h={21}><path d="M3 8l5-7 8 4-3 9H4z" fill="#d9dcdc" stroke="#b9bcbc" /><path d="M14 4q8 2 7 10h-6z" fill="#f2b9c2" /><path d="M0 18h22" stroke="#a6aaac" strokeWidth="5" /></Glyph>} />
        <Tool off caret text="线条轮廓" icon={<Glyph w={22} h={21}><path d="M1 4h17v12H1z" stroke="#9fb0c0" strokeWidth="1.300" /><path d="M11 13l6-12 3 1-6 12z" fill="#f3d79a" /><path d="M0 18h22" stroke="#a6aeb8" strokeWidth="5" /></Glyph>} />
        <Tool off caret text="阴影" icon={<Glyph w={22} h={21}><path d="M2 2h20v19H2z" fill="#c9d2d4" /><path d="M0 0h20v20H0z" fill="#a5dbdc" /></Glyph>} />
      </Stack>
    </GroupBody>
    <GroupLabel><span>样式</span><Launcher /></GroupLabel>
  </Group>
);

const ReplaceGroup = () => (
  <Group $w={129}>
    <GroupBody $pl={12}>
      <Stack $top={6}>
        <Tool text="查找文本" icon={<Glyph w={22} h={21}><path d="M4 0h4v4l2 3v14H0V11l3-6zM14 0h4v5l3 6v10H12V7l2-3z" fill="#2d6296" /><path d="M9 8h4v5H9z" fill="#2d6296" /><path d="M2 15h6v4H2zM14 15h6v4h-6z" fill="#7ea6cd" /></Glyph>} />
        <Tool text="替换" icon={<Glyph w={22} h={22}><text x="4" y="9" fontFamily="Liberation Sans" fontWeight="700" fontSize="13" fill="#2d7cb0">a</text><text x="11" y="9" fontFamily="Liberation Sans" fontWeight="700" fontSize="13" fill="#f0a41c">b</text><path d="M2 10v5h6M5 11l4 4-4 4" stroke="#2b8fa8" strokeWidth="2.400" /><text x="9" y="21" fontFamily="Liberation Sans" fontWeight="700" fontSize="12" fill="#2d7cb0">ac</text></Glyph>} />
        <Tool off caret text="替换形状" icon={<Glyph w={22} h={18}><path d="M1 3h5v13H1z" fill="#9fb9dc" /><path d="M6 10h8M11 7l3 3-3 3" stroke="#f0b2bd" strokeWidth="2" /><path d="M14 5q4-5 7 3v7h-7z" fill="#f3cf92" /></Glyph>} />
      </Stack>
    </GroupBody>
    <GroupLabel $plain><span>替换</span></GroupLabel>
  </Group>
);

const LibraryPanel = () => (
  <Library>
    <LibraryHead>
      <span>符号库</span>
      <Glyph w={11} h={13}><path d="M3 1h5v6H3zM7 1v6M0 7.500h11M5.500 8v5" stroke="#55595e" strokeWidth="1.500" /></Glyph>
      <Cross s={11} c="#55595e" w={1.600} />
    </LibraryHead>
    <LibraryFrame>
      <LibraryTools>
        <Cell $w={18} $ml={11}><Glyph w={18} h={18}><path d="M0 1h5v16H0z" fill="#3d5a48" /><path d="M6 0h5v17H6z" fill="#33499c" /><path d="M12 1h6v16h-6z" fill="#cf5a56" /><path d="M0 6h18M0 12h18" stroke="#dfe6ec" strokeWidth="1.200" /></Glyph></Cell>
        <Caret $ml={10} $s={4} />
        <Cell $w={1} $ml={9}><Glyph w={1} h={19}><path d="M.500 0v19" stroke="#85898f" /></Glyph></Cell>
        <SearchCombo><Caret $s={4} /></SearchCombo>
        <Cell $w={20} $ml={9}><Glyph w={20} h={19}><rect width="20" height="19" rx="1.500" fill="#4f9a45" /><path d="M3 9.500h9M9 4l6 5.500-6 5.500" stroke="#fff" strokeWidth="3" /></Glyph></Cell>
      </LibraryTools>
      <Shelf>
        <Sections>
          {sections.map((s) => (
            <Section key={s}>
              <Glyph w={14} h={18}><rect x=".500" y=".500" width="13" height="17" fill="#7cc452" stroke="#4f8d33" /><ellipse cx="6.500" cy="9" rx="3" ry="5" fill="#dff7cc" /></Glyph>
              <span>{s}</span><Cross s={11} c="#b9bdc3" w={2} /><Grip />
            </Section>
          ))}
        </Sections>
        <Thumbs>
          {thumbs.map((t) => (
            <ThumbCell key={t.name} $on={t.on}>
              <Thumb><Glyph w={84} h={85}>{t.art}</Glyph></Thumb>
              <figcaption>{t.name}</figcaption>
              {t.on && <ThumbArrow />}
            </ThumbCell>
          ))}
        </Thumbs>
      </Shelf>
    </LibraryFrame>
    <LibraryTabs>
      <LibraryTab $on $w={87}><Glyph w={18} h={20}><path d="M1 5l9-5 7 4v14l-8 2-8-3z" fill="#f0ab42" /><path d="M6 6l7-1v12l-7 1z" fill="#f7d596" /><path d="M0 14l6-3v7z" fill="#3f9c68" /></Glyph>符号库</LibraryTab>
      <LibraryTab $w={80} $gap={4}><Cell $w={21} $ml={3}><Gear s={21} c={B} /></Cell>管理</LibraryTab>
      <LibraryTab $w={100}><Glyph w={18} h={21}><path d="M1 1h12v16H1z" fill="#fff" stroke="#7f8ea5" /><path d="M4 3h9l4 4v13H4z" fill="#fff" stroke="#4a5f80" strokeWidth="1.300" /><path d="M6 9h8M6 12h8M6 15h8" stroke="#7f9cc4" /></Glyph>文件恢复</LibraryTab>
    </LibraryTabs>
  </Library>
);

const DocumentArea = () => (
  <Doc>
    <TabStrip>
      <DocTab>
        <TabShape width="141" height="31" viewBox="0 0 141 31">
          <defs><linearGradient id="tab" x1="0" y1="0" x2="0" y2="1"><stop offset="0" stopColor="#f2f6fc" /><stop offset="1" stopColor="#c6d7f3" /></linearGradient></defs>
          <path d="M0 31L26 2q2-2 4-2h107q4 0 4 4v27" fill="url(#tab)" stroke="#93a0b4" />
        </TabShape>
        <Glyph w={21} h={21}><path d="M1 1h14v7H1z" fill="#f2a044" stroke="#cf6d1a" /><path d="M8 8v9h3M15 5h3" stroke="#b9bec6" /><path d="M9 10h8v4H9z" fill="#74bd7d" /><path d="M5 16h6v5H5z" fill="#f0b35c" /><path d="M13 16h7v5h-7z" fill="#6ba2dc" /></Glyph>
        <b>绘图1</b>
        <Cross s={11} c="#6c7786" w={1.600} />
      </DocTab>
      <Caret $s={7} $c="#6e7277" />
    </TabStrip>
    <Sheet>
      <Corner />
      <RulerH><HorizontalRuler /></RulerH>
      <RulerV><VerticalRuler /></RulerV>
      <View>
        <MindMap />
        <ScrollV>
          <Chevron d="M2 8l4-4 4 4" />
          <Row $h={214} /><i /><Row $h={244} />
          <Chevron d="M2 4l4 4 4-4" />
        </ScrollV>
        <PageBar>
          <PageNav>
            <Glyph w={9} h={11}><path d="M1 0v11" stroke="#3c4045" strokeWidth="1.500" /><path d="M9 0v11L3 5.500z" fill="#3c4045" /></Glyph>
            <Glyph w={6} h={11}><path d="M6 0v11L0 5.500z" fill="#3c4045" /></Glyph>
            <Glyph w={6} h={11}><path d="M0 0v11l6-5.500z" fill="#3c4045" /></Glyph>
            <Glyph w={9} h={11}><path d="M8 0v11" stroke="#3c4045" strokeWidth="1.500" /><path d="M0 0v11l6-5.500z" fill="#3c4045" /></Glyph>
          </PageNav>
          <PageTab>页-1</PageTab>
          <Splitter />
          <ScrollH><Chevron d="M8 1L4 6l4 5" /><i /><Chevron d="M4 1l4 5-4 5" /></ScrollH>
        </PageBar>
      </View>
    </Sheet>
    <Palette>{swatches.map((c, i) => <Swatch key={i} $c={"#" + c} />)}</Palette>
  </Doc>
);

const SideRail = () => (
  <Rail>
    <RailTab $h={134} $mb={21}>
      <Glyph w={24} h={22}><path d="M6 1h18v21H6z" fill="#fff" stroke="#5b7fae" /><path d="M9 5h14M9 9h14M9 13h14M9 17h14" stroke="#3b66a8" strokeWidth="2" /><path d="M1 6q3-5 7-2 2 4-2 8v3M5 18v4" stroke="#2d9be0" strokeWidth="3.600" /></Glyph>
      <span>动态帮助</span>
    </RailTab>
    <RailTab $h={101} $mb={20}>
      <Glyph w={24} h={22}><path d="M2 1h20v21H2z" fill="#fff" stroke="#5b7fae" strokeWidth="1.500" /><path d="M8 5h14M8 9h14M8 13h14M8 17h14" stroke="#5a7cb0" strokeWidth="1.600" /><path d="M5 4v16" stroke="#e6b96c" strokeDasharray="2 2" strokeWidth="2" /></Glyph>
      <span>数据</span>
    </RailTab>
    <RailTab $h={101} $mb={0}>
      <Glyph w={24} h={22}><path d="M3 1h20v20H3z" fill="#fff" stroke="#8096b4" /><path d="M8 4h14M8 8h14" stroke="#9fb2cc" /><path d="M-1 10h7V6l7 7-7 7v-4h-7z" fill="#43a02c" stroke="#2c7519" /></Glyph>
      <span>导出</span>
    </RailTab>
  </Rail>
);

const StatusBar = () => (
  <Status>
    <Link>www.edrawsoft.com</Link>
    <Bar $ml={12} $h={28} />
    <Cell $w={50} $ml={13}>页 1/1</Cell>
    <Coords>X = 182.5, Y= 106.5</Coords>
    <Ime>
      <Cell $w={22} $ml={8}><PenSquare c="#2f6fd0" bg="#eef5ff" s={22} /></Cell>
      <Cell $w={21} $ml={17}><b>英</b></Cell>
      <Cell $w={19} $ml={15}><Glyph w={19} h={19}><path d="M12 0q9 7 5 14-6 8-17 1 13-1 12-15z" fill="#2f74e6" /></Glyph></Cell>
      <Cell $w={15} $ml={16}><Glyph w={15} h={16}><circle cx="3" cy="3" r="2.800" fill="#2f74e6" /><path d="M8 9a3 3 0 1 1 5 2q0 3-4 5 1-2 1-4-2 0-2-3z" fill="#2f74e6" /></Glyph></Cell>
      <Cell $w={20} $ml={16}><Glyph w={20} h={19}><circle cx="10" cy="5" r="4.800" fill="#93b4ee" /><path d="M0 19q0-7 7-8h6q7 1 7 8z" fill="#93b4ee" /></Glyph></Cell>
      <Cell $w={20} $ml={16}><Gear s={20} c="#2f6fd8" /></Cell>
    </Ime>
    <Recorder>
      <Caret $ml={8} $c="#fff" $s={7.500} />
      <Cell $w={16} $ml={14}><Glyph w={15} h={15}><path d="M5 1h9v9H5zM1 5h9v9H1z" stroke="#fff" strokeWidth="1.400" /></Glyph></Cell>
      <Cell $w={18} $ml={12}><Glyph w={17} h={18}><circle cx="7" cy="7" r="5.700" stroke="#fff" strokeWidth="1.500" /><path d="M11 11l5 6" stroke="#fff" strokeWidth="2.500" /></Glyph></Cell>
      <Cell $w={18} $ml={12}><Glyph w={17} h={15}><path d="M1 14V1h14v4" stroke="#fff" strokeWidth="1.500" /><path d="M3 14h13V5" stroke="#fff" strokeWidth="1.500" strokeDasharray="2 1.500" /></Glyph></Cell>
      <Cell $w={151} $ml={33}>正在录制 [00:17:29]</Cell>
      <Cell $w={18} $ml={34}><Glyph w={18} h={18}><path d="M12 0l5 4-9 11-5-4zM2 12l4 4-6 2z" fill="#fff" /></Glyph></Cell>
      <Cell $w={11} $ml={17}><Glyph w={11} h={14}><path d="M2 0v14M8.500 0v14" stroke="#e01010" strokeWidth="4" /></Glyph></Cell>
      <Cell $w={13} $ml={20}><Glyph w={13} h={13}><path d="M0 0h13v13H0z" fill="#f01808" /></Glyph></Cell>
      <Cell $w={20} $ml={20}><Glyph w={20} h={15}><path d="M0 3h5l2-3h6l2 3h5v12H0z" fill="#fff" /><circle cx="10" cy="8.500" r="3.500" fill="#fff" stroke="#111" strokeWidth="2" /></Glyph></Cell>
      <Bar $ml={10} $h={14} />
      <Cell $w={13} $ml={7}><Cross s={12} c="#fff" w={1.300} /></Cell>
    </Recorder>
    <YellowTool><Glyph w={18} h={14}><path d="M1 1h18v12H1zM5 4h8v6H5z" stroke="#94722a" strokeWidth="1.600" /></Glyph></YellowTool>
  </Status>
);

const TaskBar = () => (
  <Taskbar>
    <Cell $w={38} $ml={16}><Glyph w={38} h={34}><path d="M0 5l16-2v13H0zM18 3l20-3v16H18zM0 18h16v13L0 29zM18 18h20v16l-20-3z" fill="#fff" /></Glyph></Cell>
    <Cell $w={43} $ml={37}><Glyph w={43} h={43}><path d="M10 0h7q-3 9 1 14-1 8-6 8Q0 19 0 9q2-8 10-9z" fill="#9ac41c" /><path d="M25 1q16-2 18 9-1 8-10 7-12 0-13-9 1-6 5-7z" fill="#3b93e8" /><path d="M6 25q10-1 17 8 1 9-7 9-12 1-16-8-1-7 6-9z" fill="#f6b519" /><path d="M31 20q10 2 11 12-2 10-11 10h-5q4-8-1-13 0-7 6-9z" fill="#e4543b" /></Glyph></Cell>
    <Cell $w={46} $ml={46}><Glyph w={46} h={40}><path d="M1 4q0-4 4-4h11l3 4h22q4 0 4 4v32H1z" fill="#f1cf78" /><path d="M6 1h7v4H6zM20 3h12v4H20z" fill="#fff" /><path d="M6 1h5v3H6z" fill="#45a34a" /><path d="M24 3h5v3h-5z" fill="#d8573a" /><path d="M1 9h44v28q0 2-2 2H3q-2 0-2-2z" fill="#f9e6a8" /><path d="M8 40V25q0-2 2-2h26q2 0 2 2v15h-7V30H15v10z" fill="#7cc0ea" stroke="#d7effb" /></Glyph></Cell>
    <Cell $w={42} $ml={44}><Glyph w={42} h={42}><circle cx="22" cy="20" r="19" fill="#2468b4" /><path d="M22 2q10 0 15 8-12-5-17 2z" fill="#6cc0ee" /><path d="M3 6q5 1 7 4 5-2 8 0-4 3-3 7l6 2q-3 5-7 4 5 9 15 4 10-7 4-20 9 6 8 17-2 17-19 18Q2 41 1 23 1 12 3 6z" fill="#f2711c" /><path d="M37 9q5 6 4 15-2 14-15 18 14-10 11-33z" fill="#fbb725" /></Glyph></Cell>
    <Cell $w={41} $ml={46}><Glyph w={41} h={43}><ellipse cx="20.500" cy="22" rx="20" ry="20" fill="#fff" /><ellipse cx="20.500" cy="22" rx="17.500" ry="17.500" fill="#5cb531" /><path d="M11 24h27M31 31q-5 5-11 4-9-2-9-12 0-10 10-11 10 1 10 10" stroke="#fff" strokeWidth="5" /><path d="M5 41Q8 10 37 1" stroke="#4da228" strokeWidth="3" /></Glyph></Cell>
    <Cell $w={45} $ml={44}><Glyph w={45} h={45}><path d="M14 0h31v35q0 10-12 10H12Q0 43 0 30V14Q2 2 14 0z" fill="#2b86fb" /><path d="M13 32V20L27 8l9 8-9 16z" fill="#fff" /><path d="M27 8l9 8-9 16-8-2z" fill="#d9e8fd" /></Glyph></Cell>
    <TaskButton $on $ml={24}><EdrawMark w={40} h={44} /></TaskButton>
    <TaskButton $ml={6}>
      <Glyph w={39} h={40}><path d="M0 0h39v40H0z" fill="#3bc48a" /><path d="M20 0h19v25z" fill="#23b7dd" /><path d="M36 14l3 26H0l6-6z" fill="#eee04a" /><rect x="6" y="7" width="27" height="27" fill="#0a0a0a" /><text x="7.500" y="21" fontFamily="Noto Sans" fontWeight="700" fontSize="17.500" fill="#fff">PC</text><path d="M9 30h11" stroke="#fff" strokeWidth="2.200" /></Glyph>
    </TaskButton>
    <Cell $w={10} $ml={890}><Glyph w={10} h={6}><path d="M0 6h10L5 0z" fill="#fff" /></Glyph></Cell>
    <Cell $w={21} $ml={19}><Glyph w={21} h={20}><path d="M6 3h14v11H6M13 14v4M8 19h10" stroke="#fff" strokeWidth="1.700" /><path d="M1 1h5v6H1zM3.500 7v8" stroke="#fff" strokeWidth="1.500" /></Glyph></Cell>
    <Cell $w={20} $ml={14}><Glyph w={20} h={21}><path d="M10 4h8v16h-8zM12 4V1h4v3" stroke="#fff" strokeWidth="1.600" /><path d="M12 8h4v10h-4z" fill="#fff" /><path d="M2 1v4M6 1v4M4 10v10" stroke="#fff" strokeWidth="1.600" /><path d="M0 5h8v4l-3 3H3L0 9z" fill="#fff" /></Glyph></Cell>
    <Cell $w={20} $ml={18}>英</Cell>
    <Cell $w={21} $ml={20}><PenSquare c="#2b3f4f" bg="#fff" /></Cell>
    <Clock>09:26<br />2017/9/5 星期二</Clock>
  </Taskbar>
);

export default function App() {
  return (
    <Screen>
      <Global />
      <Desktop>
        <TitleArea />
        <Ribbon>
          <FileGroup /><FontGroup /><BasicGroup /><ArrangeGroup /><StyleGroup /><ReplaceGroup />
        </Ribbon>
        <Work>
          <LibraryPanel />
          <DocumentArea />
          <SideRail />
        </Work>
        <StatusBar />
        <TaskBar />
      </Desktop>
    </Screen>
  );
}
